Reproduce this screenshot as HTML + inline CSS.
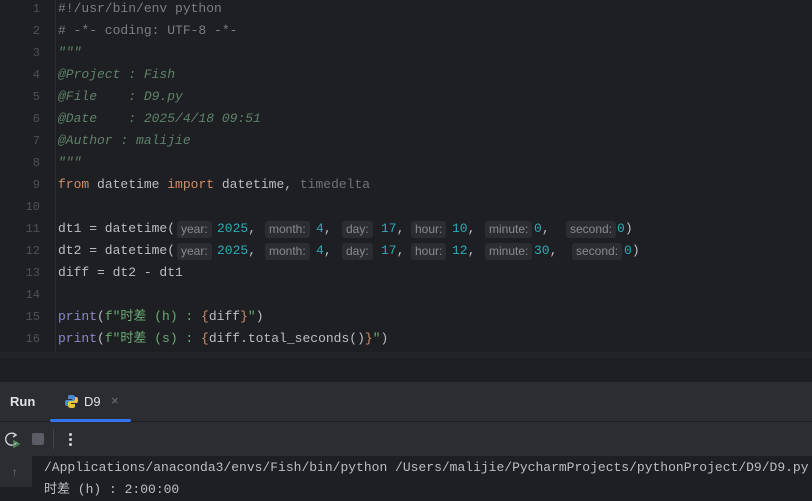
<!DOCTYPE html>
<html><head><meta charset="utf-8"><style>
*{margin:0;padding:0;box-sizing:border-box}
body{width:812px;height:487px;overflow:hidden;background:#1e1f22;position:relative;font-family:"Liberation Mono","Noto Sans CJK SC",monospace;font-size:13px;color:#bcbec4}
.ln{position:absolute;left:0;width:40px;text-align:right;color:#4b5059;font-size:12px;line-height:22px}
.cl{position:absolute;left:58px;line-height:22px;white-space:pre}
.ab{position:absolute;line-height:22px;white-space:pre}
.h{position:absolute;top:3px;height:17px;line-height:17px;background:#2b2d30;color:#868a91;font-family:"Liberation Sans",sans-serif;font-size:12px;padding:0 4px;border-radius:3px}
.c{color:#7a7e85}.d{color:#5f826b;font-style:italic}.k{color:#cf8e6d}.n{color:#2aacb8}.p{color:#8888c6}.s{color:#6aab73}.g{color:#6f737a}
</style></head><body>
<div style="position:absolute;left:55px;top:0;width:1px;height:352px;background:#2b2d30"></div>
<div id="nums"></div>
<div class="ln" style="top:-2px">1</div><div class="ln" style="top:20px">2</div><div class="ln" style="top:42px">3</div><div class="ln" style="top:64px">4</div><div class="ln" style="top:86px">5</div><div class="ln" style="top:108px">6</div><div class="ln" style="top:130px">7</div><div class="ln" style="top:152px">8</div><div class="ln" style="top:174px">9</div><div class="ln" style="top:196px">10</div><div class="ln" style="top:218px">11</div><div class="ln" style="top:240px">12</div><div class="ln" style="top:262px">13</div><div class="ln" style="top:284px">14</div><div class="ln" style="top:306px">15</div><div class="ln" style="top:328px">16</div>
<div class="cl c" style="top:-2px">#!/usr/bin/env python</div>
<div class="cl c" style="top:20px"># -*- coding: UTF-8 -*-</div>
<div class="cl d" style="top:42px">"""</div>
<div class="cl d" style="top:64px">@Project : Fish</div>
<div class="cl d" style="top:86px">@File    : D9.py</div>
<div class="cl d" style="top:108px">@Date    : 2025/4/18 09:51</div>
<div class="cl d" style="top:130px">@Author : malijie</div>
<div class="cl d" style="top:152px">"""</div>
<div class="cl" style="top:174px"><span class="k">from</span> datetime <span class="k">import</span> datetime, <span class="g">timedelta</span></div>
<div class="cl" style="top:218px">dt1 = datetime(</div>
<div style="position:absolute;top:218px;left:0;width:812px;height:22px">
<span class="h" style="left:177px">year:</span><span class="ab n" style="left:217px">2025<span style="color:#bcbec4">,</span></span>
<span class="h" style="left:265px">month:</span><span class="ab n" style="left:316px">4<span style="color:#bcbec4">,</span></span>
<span class="h" style="left:342px">day:</span><span class="ab n" style="left:381px">17<span style="color:#bcbec4">,</span></span>
<span class="h" style="left:411px">hour:</span><span class="ab n" style="left:452px">10<span style="color:#bcbec4">,</span></span>
<span class="h" style="left:485px">minute:</span><span class="ab n" style="left:534px">0<span style="color:#bcbec4">,</span></span>
<span class="h" style="left:566px">second:</span><span class="ab n" style="left:617px">0<span style="color:#bcbec4">)</span></span>
</div>
<div class="cl" style="top:240px">dt2 = datetime(</div>
<div style="position:absolute;top:240px;left:0;width:812px;height:22px">
<span class="h" style="left:177px">year:</span><span class="ab n" style="left:217px">2025<span style="color:#bcbec4">,</span></span>
<span class="h" style="left:265px">month:</span><span class="ab n" style="left:316px">4<span style="color:#bcbec4">,</span></span>
<span class="h" style="left:342px">day:</span><span class="ab n" style="left:381px">17<span style="color:#bcbec4">,</span></span>
<span class="h" style="left:411px">hour:</span><span class="ab n" style="left:452px">12<span style="color:#bcbec4">,</span></span>
<span class="h" style="left:485px">minute:</span><span class="ab n" style="left:534px">30<span style="color:#bcbec4">,</span></span>
<span class="h" style="left:572px">second:</span><span class="ab n" style="left:624px">0<span style="color:#bcbec4">)</span></span>
</div>
<div class="cl" style="top:262px">diff = dt2 - dt1</div>
<div class="cl" style="top:306px"><span class="p">print</span>(<span class="s">f"时差 (h) : </span><span class="k">{</span>diff<span class="k">}</span><span class="s">"</span>)</div>
<div class="cl" style="top:328px"><span class="p">print</span>(<span class="s">f"时差 (s) : </span><span class="k">{</span>diff.total_seconds()<span class="k">}</span><span class="s">"</span>)</div>
<div style="position:absolute;left:0;top:352px;width:812px;height:6px;background:#232427"></div>
<div style="position:absolute;left:0;top:382px;width:812px;height:74px;background:#2b2d30"></div>
<div style="position:absolute;left:0;top:421px;width:812px;height:1px;background:#1e1f22"></div>
<div style="position:absolute;left:10px;top:394px;font-family:'Liberation Sans',sans-serif;font-weight:bold;font-size:13px;color:#dfe1e5">Run</div>
<svg style="position:absolute;left:64px;top:394px" width="15" height="15" viewBox="0 0 15 15"><path d="M7 1C4 1 4 2 4 3v2h4v1H2.5C1 6 1 8 1 9s0 3 2 3h1v-2c0-1 1-2 2-2h3c1 0 2-1 2-2V3c0-1-1-2-4-2z" fill="#4a8bd0"/><path d="M8 14c3 0 3-1 3-2v-2H7V9h5.5c1.5 0 1.5-2 1.5-3s0-3-2-3h-1v2c0 1-1 2-2 2H6c-1 0-2 1-2 2v3c0 1 1 2 4 2z" fill="#e8c440"/></svg>
<div style="position:absolute;left:84px;top:394px;font-family:'Liberation Sans',sans-serif;font-size:13px;color:#dfe1e5">D9</div>
<div style="position:absolute;left:111px;top:393px;font-family:'Liberation Sans',sans-serif;font-size:13px;color:#6f737a">×</div>
<div style="position:absolute;left:50px;top:419px;width:81px;height:3px;background:#3574f0;border-radius:2px"></div>
<svg style="position:absolute;left:4px;top:431px" width="18" height="18" viewBox="0 0 18 18"><path d="M12 4A6 6 0 1 0 13 11" fill="none" stroke="#ced0d6" stroke-width="1.4"/><path d="M9 2l3 2-3 2" fill="none" stroke="#ced0d6" stroke-width="1.4"/><path d="M10 10l5 3-5 3z" fill="none" stroke="#57965c" stroke-width="1.3"/></svg>
<div style="position:absolute;left:32px;top:433px;width:12px;height:12px;background:#5a5d63;border-radius:2px"></div>
<div style="position:absolute;left:53px;top:429px;width:1px;height:20px;background:#43454a"></div>
<div style="position:absolute;left:69px;top:433px;width:3px;height:3px;background:#ced0d6;border-radius:2px;box-shadow:0 5px 0 #ced0d6,0 10px 0 #ced0d6"></div>
<div style="position:absolute;left:0;top:456px;width:32px;height:31px;background:#2b2d30"></div>
<div style="position:absolute;left:11px;top:466px;color:#6f737a;font-size:12px">↑</div>
<div class="ab" style="left:44px;top:457px;color:#bcbec4">/Applications/anaconda3/envs/Fish/bin/python /Users/malijie/PycharmProjects/pythonProject/D9/D9.py</div>
<div class="ab" style="left:44px;top:479px;color:#bcbec4">时差 (h) : 2:00:00</div>
</body></html>
